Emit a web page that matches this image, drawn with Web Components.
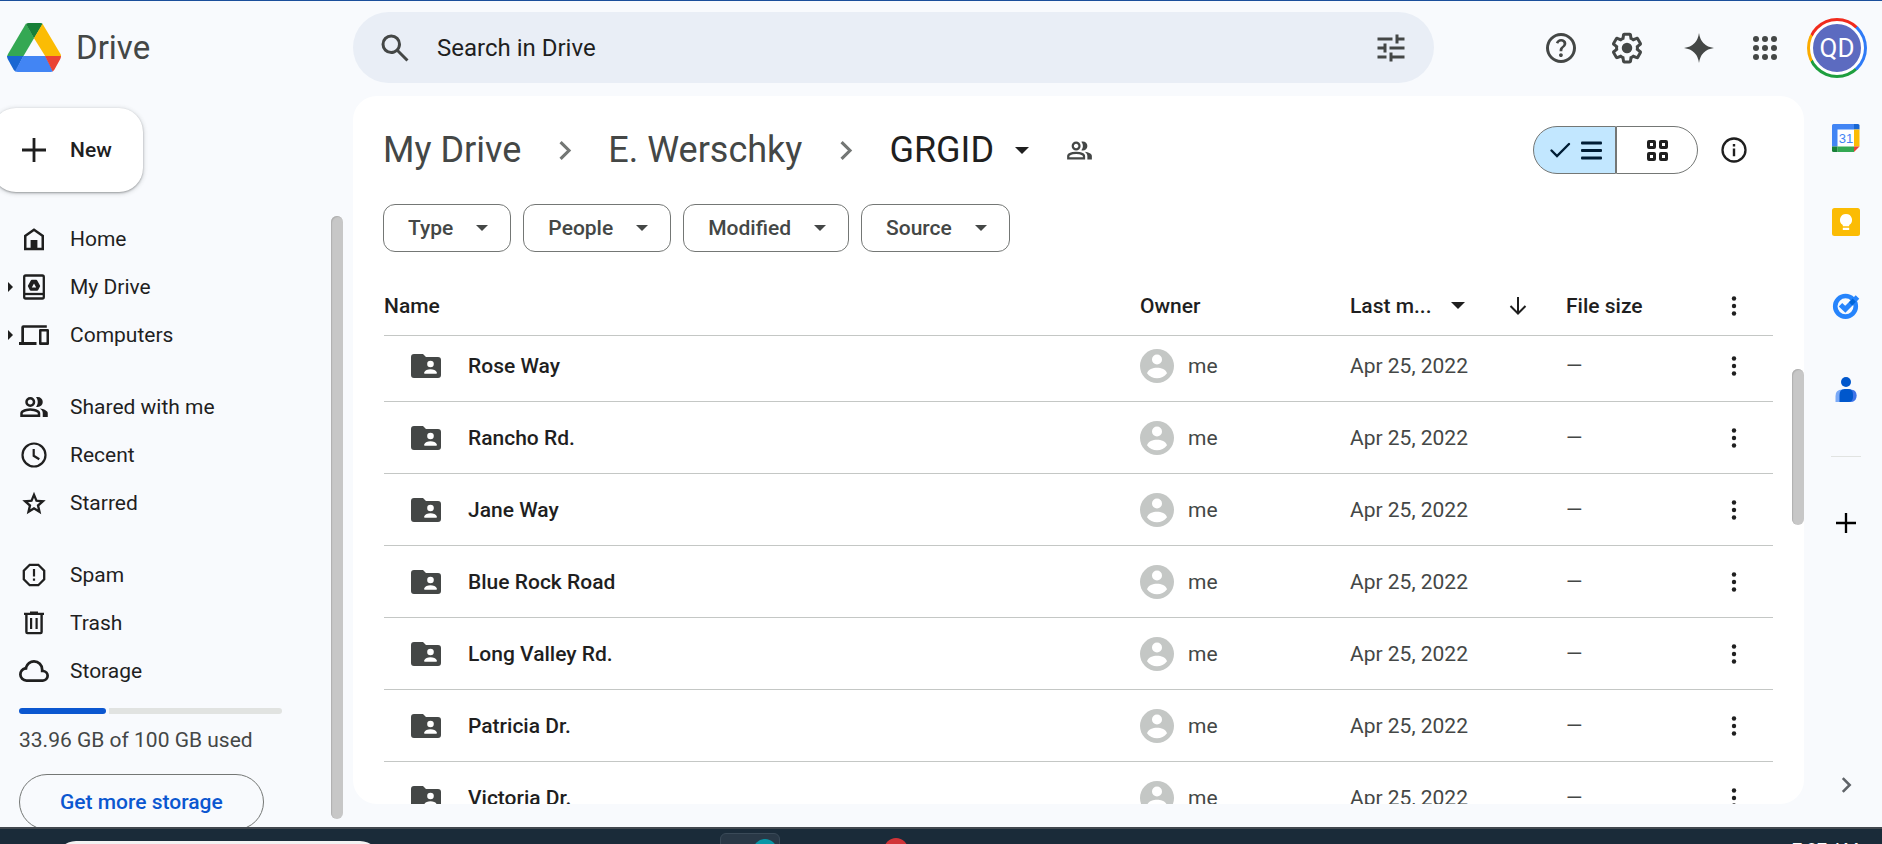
<!DOCTYPE html>
<html lang="en">
<head>
<meta charset="utf-8">
<title>GRGID - Google Drive</title>
<style>
  html, body { margin: 0; height: 100%; }
  body {
    --ink: #1f1f1f; --soft: #444746; --line: #c4c7c5; --edge: #747775;
    --page: #f8fafd; --panel: #ffffff; --field: #e9eef6; --accent: #0b57d0;
    font-family: Roboto, "Liberation Sans", sans-serif; font-size: 21px; line-height: 24px;
    color: var(--ink); background: var(--page); overflow: hidden;
  }
</style>
</head>
<body>
<drive-app></drive-app>
<script>
const ICONS = {
  search: ["0 -960 960 960", `<path d="M784-120 532-372q-30 24-69 38t-83 14q-109 0-184.500-75.500T120-580q0-109 75.500-184.500T380-840q109 0 184.500 75.500T640-580q0 44-14 83t-38 69l252 252-56 56ZM380-400q75 0 127.500-52.500T560-580q0-75-52.500-127.500T380-760q-75 0-127.500 52.500T200-580q0 75 52.500 127.500T380-400Z"/>`],
  tune: ["0 0 24 24", `<path d="M3 17v2h6v-2H3zM3 5v2h10V5H3zm10 16v-2h8v-2h-8v-2h-2v6h2zM7 9v2H3v2h4v2h2V9H7zm14 4v-2H11v2h10zm-6-4h2V7h4V5h-4V3h-2v6z"/>`],
  help: ["0 -960 960 960", `<path d="M478-240q21 0 35.500-14.500T528-290q0-21-14.500-35.500T478-340q-21 0-35.500 14.500T428-290q0 21 14.500 35.500T478-240Zm-36-154h74q0-33 7.500-52t42.500-52q26-26 41-49.500t15-56.500q0-56-41-86t-97-30q-57 0-92.500 30T342-618l66 26q5-18 22.500-39t53.500-21q32 0 48 17.500t16 38.500q0 20-12 37.500T506-526q-44 39-54 59t-10 73Zm38 314q-83 0-156-31.500T197-197q-54-54-85.500-127T80-480q0-83 31.500-156T197-763q54-54 127-85.500T480-880q83 0 156 31.500T763-763q54 54 85.500 127T880-480q0 83-31.500 156T763-197q-54 54-127 85.500T480-80Zm0-80q134 0 227-93t93-227q0-134-93-227t-227-93q-134 0-227 93t-93 227q0 134 93 227t227 93Z"/>`],
  gear: ["0 0 24 24", `<path d="M13.85 22.25h-3.7c-.74 0-1.36-.54-1.45-1.27l-.27-1.89c-.27-.14-.53-.29-.79-.46l-1.8.72c-.7.26-1.47-.03-1.81-.65L2.2 15.53c-.35-.66-.2-1.44.36-1.88l1.53-1.19c-.01-.15-.02-.3-.02-.46 0-.15.01-.31.02-.46l-1.52-1.19c-.59-.45-.74-1.26-.37-1.88l1.85-3.19c.34-.62 1.11-.9 1.79-.63l1.81.73c.26-.17.52-.32.78-.46l.27-1.91c.09-.7.71-1.25 1.44-1.25h3.7c.74 0 1.36.54 1.45 1.27l.27 1.89c.27.14.53.29.79.46l1.8-.72c.71-.26 1.48.03 1.82.65l1.84 3.18c.36.66.2 1.44-.36 1.88l-1.52 1.19c.01.15.02.3.02.46s-.01.31-.02.46l1.52 1.19c.56.45.72 1.23.37 1.86l-1.86 3.22c-.34.62-1.11.9-1.8.63l-1.8-.72c-.26.17-.52.32-.78.46l-.27 1.91c-.1.68-.72 1.22-1.46 1.22zm-3.23-2h2.76l.37-2.55.53-.22c.44-.18.88-.44 1.34-.78l.45-.34 2.38.96 1.38-2.4-2.03-1.58.07-.56c.03-.26.06-.51.06-.78s-.03-.53-.06-.78l-.07-.56 2.03-1.58-1.39-2.4-2.39.96-.45-.35c-.42-.32-.87-.58-1.33-.77l-.52-.22-.37-2.55h-2.76l-.37 2.55-.53.21c-.44.19-.88.44-1.34.79l-.45.33-2.38-.95-1.39 2.39 2.03 1.58-.07.56a7 7 0 0 0-.06.79c0 .26.02.53.06.78l.07.56-2.03 1.58 1.38 2.4 2.39-.96.45.35c.43.33.86.58 1.33.77l.53.22.38 2.55z"/><circle cx="12" cy="12" r="3.500"/>`],
  spark: ["0 0 24 24", `<path d="M12 2Q13.200 10.800 22 12Q13.200 13.200 12 22Q10.800 13.200 2 12Q10.800 10.800 12 2Z"/>`],
  apps: ["0 0 24 24", [6, 12, 18].flatMap(y => [6, 12, 18].map(x => `<circle cx="${x}" cy="${y}" r="2"/>`)).join("")],
  plus: ["0 0 24 24", `<path d="M10.600 0h2.800v10.600H24v2.800H13.400V24h-2.800V13.400H0v-2.800h10.600z"/>`],
  home: ["0 0 30 30", `<path fill-rule="evenodd" d="M5 11.300 15 4.300 25 11.300V26.300H5ZM7.500 12.600V23.800H11.600V16H18.400V23.800H22.500V12.600L15 7.300Z"/>`],
  mydrive: ["0 0 30 30", `<g fill="none" stroke="currentColor" stroke-width="2.300"><rect x="5.200" y="3.500" width="19.600" height="23" rx="1.500"/><path d="M5 22H25"/></g><path fill-rule="evenodd" d="M12.800 7.800H17.200Q17.800 7.800 18.200 8.500L21 13.500Q21.300 14 21 14.600L19.200 18Q18.900 18.700 18 18.700H12Q11.100 18.700 10.800 18L9 14.600Q8.700 14 9 13.500L11.800 8.500Q12.200 7.800 12.800 7.800ZM15 11.500 12.800 15.500H17.200Z"/>`],
  computers: ["0 0 30 30", `<path fill-rule="evenodd" d="M2.300 22V7.300Q2.300 5.300 4.300 5.300H27.800V7.800H5V22H17.500V25H0V22ZM21.300 9H28.700Q30 9 30 10.300V23.700Q30 25 28.700 25H21.300Q20 25 20 23.700V10.300Q20 9 21.300 9ZM22.500 11.500V22.300H27.500V11.500Z"/>`],
  people: ["0 -960 960 960", `<path d="M40-160v-112q0-34 17.500-62.500T104-378q62-31 126-46.500T360-440q66 0 130 15.500T616-378q29 15 46.500 43.500T680-272v112H40Zm720 0v-120q0-44-24.500-84.500T666-434q51 6 96 20.500t84 35.500q36 20 55 44.500t19 53.500v120H760ZM360-480q-66 0-113-47t-47-113q0-66 47-113t113-47q66 0 113 47t47 113q0 66-47 113t-113 47Zm400-160q0 66-47 113t-113 47q-11 0-28-2.500t-28-5.500q27-32 41.500-71t14.500-81q0-42-14.500-81T544-792q14-5 28-6.500t28-1.500q66 0 113 47t47 113ZM120-240h480v-32q0-11-5.500-20T580-306q-54-27-109-40.500T360-360q-56 0-111 13.500T140-306q-9 5-14.500 14t-5.500 20v32Zm240-320q33 0 56.500-23.500T440-640q0-33-23.500-56.500T360-720q-33 0-56.500 23.500T280-640q0 33 23.500 56.500T360-560Z"/>`],
  recent: ["0 0 30 30", `<g fill="none" stroke="currentColor" stroke-width="2.200"><circle cx="15" cy="15" r="11.500"/><path d="M14.700 9V15.800L20.300 19.300"/></g>`],
  star: ["-32 -972 1024 1024", `<path d="m354-247 126-76 126 77-33-144 111-96-146-13-58-136-58 135-146 13 111 97-33 143ZM233-80l65-281L80-550l288-25 112-265 112 265 288 25-218 189 65 281-247-149L233-80Z"/>`],
  spam: ["0 0 30 30", `<path fill="none" stroke="currentColor" stroke-width="2.300" d="M10.700 4.800H19.300L25.200 10.700V19.300L19.300 25.200H10.700L4.800 19.300V10.700Z"/><path d="M13.900 9h2.200v7.500h-2.200zM13.900 18.500h2.200v2.300h-2.200z"/>`],
  trash: ["0 0 30 30", `<path fill-rule="evenodd" d="M5 4.700H11V3.400H19V4.700H25V7H23.800V24Q23.800 26.200 21.600 26.200H8.400Q6.200 26.200 6.200 24V7H5ZM8.600 7V23.900H21.400V7Z"/><path d="M11 10h2.200v11H11zM16.500 10h2.200v11h-2.200z"/>`],
  cloud: ["40 -920 880 880", `<path d="M260-160q-91 0-155.500-63T40-377q0-78 47-139t123-78q25-92 100-149t170-57q117 0 198.500 81.500T760-520q69 8 114.500 59.500T920-340q0 75-52.500 127.500T740-160H260Zm0-80h480q42 0 71-29t29-71q0-42-29-71t-71-29h-60v-80q0-83-58.500-141.500T480-720q-83 0-141.500 58.500T280-520h-20q-58 0-99 41t-41 99q0 58 41 99t99 41Z"/>`],
  chevron: ["0 0 24 24", `<path fill="none" stroke="currentColor" stroke-width="2.800" d="M8.500 4.500 16 12 8.500 19.500"/>`],
  caret: ["0 0 14 7", `<path d="M0 0H14L7 7Z"/>`],
  sidecaret: ["0 0 5 10", `<path d="M0 0 5 5 0 10Z"/>`],
  check: ["0 0 24 24", `<path fill="none" stroke="currentColor" stroke-width="2.400" stroke-linecap="round" d="M3.500 12.500 9 18 21 6"/>`],
  rows: ["0 0 21 21", `<rect y="1.500" width="21" height="3" rx="1"/><rect y="9" width="21" height="3" rx="1"/><rect y="16.500" width="21" height="3" rx="1"/>`],
  grid: ["0 0 21 21", `<g fill="none" stroke="currentColor" stroke-width="3"><rect x="1.500" y="1.500" width="6" height="6" rx=".5"/><rect x="13.500" y="1.500" width="6" height="6" rx=".5"/><rect x="1.500" y="13.500" width="6" height="6" rx=".5"/><rect x="13.500" y="13.500" width="6" height="6" rx=".5"/></g>`],
  info: ["0 0 26 26", `<circle cx="13" cy="13" r="11.500" fill="none" stroke="currentColor" stroke-width="2.300"/><path d="M11.800 11.500h2.400v7.800h-2.400zM11.800 7h2.400v2.400h-2.400z"/>`],
  arrow: ["0 0 18 18", `<path fill="none" stroke="currentColor" stroke-width="2" d="M9 0V16M1.500 9 9 16.500 16.500 9"/>`],
  dots: ["0 0 20 20", `<circle cx="10" cy="2.500" r="2.200"/><circle cx="10" cy="10" r="2.200"/><circle cx="10" cy="17.500" r="2.200"/>`],
  folder: ["0 0 30 24", `<path d="M3 0H12L15 3H27Q30 3 30 6V21Q30 24 27 24H3Q0 24 0 21V3Q0 0 3 0Z"/><circle cx="19.500" cy="10" r="3.300" fill="#fff"/><path fill="#fff" d="M13.300 19.800V18.300C14.500 14.300 24.500 14.300 25.700 18.300V19.800Z"/>`],
  person: ["0 0 34 34", `<circle cx="17" cy="17" r="17"/><circle cx="17" cy="10.500" r="5" fill="#fff"/><path fill="#fff" d="M7 24.300C8 20.500 13 18.800 17 18.800S26 20.500 27 24.300C24.500 27.500 21 29.300 17 29.300S9.500 27.500 7 24.300Z"/>`],
  logo: ["0 0 54 49", `<path fill="#34a853" d="M19 .5 1 31Q0 33 0 33.500H16.200L27 15.300Z"/><path fill="#188038" d="M21.500 0H33.500Q35 0 35.700 1L27 15.500 19 1Q20 0 21.500 0Z"/><path fill="#fbbc04" d="M35.500.7 53.500 31Q54 32 54 33.300H38.300L27 15.300Z"/><path fill="#1967d2" d="M0 33H16.500L8.500 48.500Q7.500 48 6.500 46.500L.7 36Q0 34.500 0 33Z"/><path fill="#4285f4" d="M16.300 33H38.300L46 48.300Q45 49 43.500 49H11Q9 49 8 48.300Z"/><path fill="#ea4335" d="M38 33H54Q54 34.500 53.300 36L47.500 46.500Q46.800 47.800 45.700 48.400Z"/>`],
  calendar: ["0 0 28 28", `<rect x="5" y="5" width="18" height="18" fill="#fff"/><path fill="#4285f4" d="M1.500 0H22V5.500H5.500V22.500H0V1.500Q0 0 1.500 0Z"/><path fill="#1967d2" d="M22 0H26Q27.500 0 27.500 1.500V5.500H22Z"/><path fill="#fbbc04" d="M22 5.500H27.500V22.500H22Z"/><path fill="#34a853" d="M5.500 22.500H22V28H5.500Z"/><path fill="#188038" d="M0 22.500H5.500V28H1.500Q0 28 0 26.500Z"/><path fill="#ea4335" d="M22 22.500H27.500L22 28Z"/><text x="14" y="19" font-size="13" font-weight="500" text-anchor="middle" fill="#4285f4">31</text>`],
  keep: ["0 0 28 28", `<rect width="28" height="28" rx="2.500" fill="#fbbc04"/><path fill="#fff" d="M14 6a6 6 0 0 1 3.200 11.100V18.300H10.800V17.100A6 6 0 0 1 14 6ZM10.800 19.700H17.200V22H10.800Z"/>`],
  tasks: ["0 0 28 28", `<circle cx="13.500" cy="14.300" r="10.300" fill="none" stroke="#2684fc" stroke-width="4.600"/><path fill="none" stroke="#2684fc" stroke-width="5" d="M8.500 12.800 13.300 17.300 25.500 5"/><path stroke="#0066da" stroke-width="4.600" d="M18.600 11.800 22.300 8.200"/>`],
  contacts: ["0 0 28 28", `<circle cx="14" cy="6" r="5" fill="#0057cc"/><path fill="#7baaf7" d="M3.500 26V20Q3.500 13.500 10 13.500H18Q24.500 13.500 24.500 19.500Q24.500 26 18.500 26Z"/><path fill="#3f74e8" d="M13 13.500H18Q24.500 13.500 24.500 19.500Q24.500 26 18.500 26H13Z"/><path fill="#0057cc" d="M7.500 26V19Q7.500 13 12.500 13H16Q21 13 21 18.500V21Q21 26 16 26Z"/>`]
};

function define(name, html, setup) {
  const tpl = document.createElement("template");
  tpl.innerHTML = html;
  customElements.define(name, class extends HTMLElement {
    connectedCallback() {
      if (this.shadowRoot) return;
      const root = this.attachShadow({ mode: "open" });
      root.append(tpl.content.cloneNode(true));
      if (setup) setup(this, root);
    }
  });
}

define("d-icon", `<style>:host{display:block;flex:none}svg{display:block;fill:currentColor}</style>`, (el, root) => {
  const [box, body] = ICONS[el.getAttribute("name")];
  const w = el.getAttribute("w") || 30, h = el.getAttribute("h") || w;
  root.innerHTML += `<svg viewBox="${box}" width="${w}" height="${h}" aria-hidden="true">${body}</svg>`;
});

define("icon-button", `<style>
  :host{display:block;flex:none;width:60px;height:60px}
  button{display:flex;align-items:center;justify-content:center;width:100%;height:100%;padding:0;border:0;background:none;color:inherit}
</style><button><slot></slot></button>`, (el, root) => root.querySelector("button").setAttribute("aria-label", el.getAttribute("label")));

define("search-bar", `<style>
  :host{display:block}
  form{display:flex;align-items:center;height:71px;box-sizing:border-box;padding:0 13px 0 12px;border-radius:36px;background:var(--field);color:var(--soft)}
  input{flex:1;min-width:0;margin-left:12px;padding:0;border:0;outline:0;background:none;font:inherit;font-size:24px;line-height:36px;color:var(--ink)}
  input::placeholder{color:var(--ink);opacity:1}
</style>
<form role="search">
  <icon-button label="Search"><d-icon name="search" w="36"></d-icon></icon-button>
  <input type="text" aria-label="Search in Drive" placeholder="Search in Drive">
  <icon-button label="Advanced search"><d-icon name="tune" w="36"></d-icon></icon-button>
</form>`);

define("account-avatar", `<style>
  :host{display:block;flex:none}
  button{display:flex;align-items:center;justify-content:center;width:60px;height:60px;padding:3px;border:0;border-radius:50%;
    background:conic-gradient(#f12b1d 0 43deg,#2f7bf6 43deg 138deg,#1e9e3e 138deg 243deg,#fbab00 243deg 297deg,#f12b1d 297deg)}
  span{display:flex;align-items:center;justify-content:center;box-sizing:border-box;width:54px;height:54px;border:3px solid #fff;border-radius:50%;background:#5c6bc0;color:#fff;font:26px/36px Roboto,sans-serif}
</style><button aria-label="Account"><span><slot></slot></span></button>`);

define("top-bar", `<style>
  :host{display:grid;grid-template-columns:353px 1fr auto;align-items:center;height:96px;box-sizing:border-box;padding-bottom:2px;border-top:1px solid #1b4f9b;color:var(--soft)}
  .brand{display:flex;align-items:center;gap:15px;padding-left:7px;color:inherit;text-decoration:none;font-size:33px;line-height:36px}
  .tools,.pair{display:flex}
  .tools{gap:12px;padding:0 15px 0 97px}
  .pair{gap:6px}
</style>
<a class="brand" href="#home"><d-icon name="logo" w="54" h="49"></d-icon><span>Drive</span></a>
<search-bar></search-bar>
<div class="tools">
  <div class="pair">
    <icon-button label="Support"><d-icon name="help" w="36"></d-icon></icon-button>
    <icon-button label="Settings"><d-icon name="gear" w="36"></d-icon></icon-button>
  </div>
  <div class="pair">
    <icon-button label="Ask Gemini"><d-icon name="spark" w="36"></d-icon></icon-button>
    <icon-button label="Google apps"><d-icon name="apps" w="36"></d-icon></icon-button>
  </div>
  <account-avatar>QD</account-avatar>
</div>`);

define("nav-item", `<style>
  :host{display:block}
  a{display:grid;grid-template-columns:11px 30px 1fr;align-items:center;height:48px;padding-left:8px;color:inherit;text-decoration:none}
  .label{margin-left:21px}
</style><a href="#"><span class="lead"></span><span class="icon"></span><span class="label"><slot></slot></span></a>`, (el, root) => {
  const name = el.getAttribute("icon");
  root.querySelector("a").href = "#" + name;
  root.querySelector(".icon").innerHTML = `<d-icon name="${name}"></d-icon>`;
  if (el.hasAttribute("expandable")) root.querySelector(".lead").innerHTML = `<d-icon name="sidecaret" w="5" h="10"></d-icon>`;
});

define("storage-meter", `<style>
  :host{display:block;padding:13px 0 0 19px}
  .bar{display:flex;gap:3px;width:263px;height:6px}
  .used{width:33%;border-radius:3px;background:var(--accent)}
  .free{flex:1;border-radius:0 3px 3px 0;background:#e1e3e1}
  p{margin:14px 0 22px;color:var(--soft)}
  button{height:56px;padding:0 40px;border:1px solid var(--edge);border-radius:28px;background:none;font:inherit;font-weight:500;color:var(--accent)}
</style>
<div class="bar" role="meter" aria-label="Storage used" aria-valuemin="0" aria-valuemax="100" aria-valuenow="33.96"><div class="used"></div><div class="free"></div></div>
<p>33.96 GB of 100 GB used</p>
<button>Get more storage</button>`);

define("side-bar", `<style>
  :host{display:flex;flex-direction:column;min-height:0;overflow:hidden}
  .new{display:flex;align-items:center;gap:24px;align-self:flex-start;flex:none;height:84px;margin:12px 0 23px -8px;padding:0 31px 0 30px;border:0;border-radius:24px;
    background:#fff;color:inherit;font:inherit;font-weight:500;box-shadow:0 1px 2px rgba(60,64,67,.4),0 1px 4px 1px rgba(60,64,67,.18)}
  .scroll{display:flex;flex:1;min-height:0}
  .list{overflow:hidden;flex:1}
  .group{margin-bottom:24px}
  .group.last{margin:0}
  .thumb{width:12px;margin:1px 10px 8px 0;border-radius:6px;background:#c7c7c7;box-shadow:inset 1px 1px 1px #b0b0b0}
</style>
<button class="new"><d-icon name="plus" w="24"></d-icon><span>New</span></button>
<div class="scroll">
  <nav class="list" aria-label="Drive">
    <div class="group">
      <nav-item icon="home">Home</nav-item>
      <nav-item icon="mydrive" expandable>My Drive</nav-item>
      <nav-item icon="computers" expandable>Computers</nav-item>
    </div>
    <div class="group">
      <nav-item icon="people">Shared with me</nav-item>
      <nav-item icon="recent">Recent</nav-item>
      <nav-item icon="star">Starred</nav-item>
    </div>
    <div class="group last">
      <nav-item icon="spam">Spam</nav-item>
      <nav-item icon="trash">Trash</nav-item>
      <nav-item icon="cloud">Storage</nav-item>
    </div>
    <storage-meter></storage-meter>
  </nav>
  <div class="thumb"></div>
</div>`);

define("bread-crumbs", `<style>
  :host{display:block;font-size:36px;line-height:48px;color:var(--soft)}
  nav{display:flex;align-items:center}
  a{color:inherit;text-decoration:none}
  .sep{display:flex;justify-content:center;width:87px;color:var(--edge)}
  .current{display:flex;align-items:center;gap:21px;padding:0;border:0;background:none;font:inherit;color:var(--ink)}
  icon-button{margin-left:20px}
</style>
<nav aria-label="Folder path">
  <a href="#my-drive">My Drive</a><span class="sep"><d-icon name="chevron" w="27"></d-icon></span>
  <a href="#werschky">E. Werschky</a><span class="sep"><d-icon name="chevron" w="27"></d-icon></span>
  <button class="current"><span>GRGID</span><d-icon name="caret" w="14" h="7"></d-icon></button>
  <icon-button label="Manage access"><d-icon name="people" w="27"></d-icon></icon-button>
</nav>`);

define("view-toggle", `<style>
  :host{display:flex;height:48px;color:var(--ink)}
  button{display:flex;align-items:center;justify-content:center;gap:9px;box-sizing:border-box;width:83px;padding:0;border:1px solid var(--edge);background:none;color:inherit}
  .list{border-radius:24px 0 0 24px;background:#c2e7ff;color:#001d35}
  .tiles{width:82px;border-radius:0 24px 24px 0}
</style>
<button class="list" aria-label="List layout" aria-pressed="true"><d-icon name="check" w="24"></d-icon><d-icon name="rows" w="21"></d-icon></button>
<button class="tiles" aria-label="Grid layout" aria-pressed="false"><d-icon name="grid" w="21"></d-icon></button>`);

define("filter-chip", `<style>
  :host{display:block}
  button{display:flex;align-items:center;gap:23px;height:48px;padding:0 22px 0 24px;border:1px solid var(--edge);border-radius:12px;background:none;font:inherit;font-weight:500;color:var(--soft)}
</style><button aria-haspopup="menu"><span><slot></slot></span><d-icon name="caret" w="12" h="6"></d-icon></button>`);

define("file-table", `<style>
  :host{display:block;overflow:hidden}
  table{width:100%;table-layout:fixed;border-collapse:separate;border-spacing:0}
  th,td{box-sizing:border-box;padding:0;border-bottom:1px solid var(--line);text-align:left;font-weight:400;color:var(--soft)}
  td{height:72px}
  th{position:sticky;top:0;height:60px;background:var(--panel);font-weight:500;color:var(--ink)}
  .owner{width:210px}.date{width:216px}.size{width:130px}.more{width:77px}
  .name,.who,.sort{display:flex;align-items:center}
  .name{gap:27px;padding-left:27px;font-weight:500;color:var(--ink)}
  .name d-icon{color:var(--soft)}
  .who{gap:14px}.who d-icon{color:var(--line)}
  .sort button{display:flex;align-items:center;padding:0;border:0;background:none;color:inherit;font:inherit;text-align:left}
  .label{width:101px}
  .sort .dir{margin-left:44px}
  icon-button{width:76px;height:48px;color:var(--ink)}
</style>
<table>
  <thead><tr>
    <th>Name</th><th class="owner">Owner</th>
    <th class="date"><div class="sort"><button><span class="label">Last m...</span><d-icon name="caret" w="14" h="7"></d-icon></button><button class="dir" aria-label="Reverse sort direction"><d-icon name="arrow" w="18"></d-icon></button></div></th>
    <th class="size">File size</th>
    <th class="more"><icon-button label="More sorting options"><d-icon name="dots" w="20"></d-icon></icon-button></th>
  </tr></thead>
  <tbody></tbody>
</table>`, (el, root) => {
  const folders = ["Rose Way", "Rancho Rd.", "Jane Way", "Blue Rock Road", "Long Valley Rd.", "Patricia Dr.", "Victoria Dr."];
  root.querySelector("tbody").innerHTML = folders.map(f => `<tr>
    <td><div class="name"><d-icon name="folder" w="30" h="24"></d-icon><span>${f}</span></div></td>
    <td><div class="who"><d-icon name="person" w="34"></d-icon><span>me</span></div></td>
    <td>Apr 25, 2022</td><td>—</td>
    <td><icon-button label="More actions"><d-icon name="dots" w="20"></d-icon></icon-button></td></tr>`).join("");
  el.scrollTop = 6;
});

define("file-panel", `<style>
  :host{display:flex;flex-direction:column;min-width:0;min-height:0;margin-bottom:23px;border-radius:24px;background:var(--panel);overflow:hidden}
  .head{display:flex;align-items:center;justify-content:space-between;height:108px;flex:none;padding:0 40px 0 30px}
  .actions{display:flex;align-items:center;gap:6px}
  .chips{display:flex;gap:12px;flex:none;padding:0 30px}
  .body{display:flex;flex:1;min-height:0;margin-top:24px;padding-left:31px;gap:19px}
  file-table{flex:1;min-width:0}
  .thumb{width:12px;height:156px;margin-top:93px;border-radius:6px;background:#c7c7c7;box-shadow:inset 1px 1px 1px #b0b0b0}
</style>
<div class="head">
  <bread-crumbs></bread-crumbs>
  <div class="actions"><view-toggle></view-toggle><icon-button label="View details"><d-icon name="info" w="26"></d-icon></icon-button></div>
</div>
<div class="chips"><filter-chip>Type</filter-chip><filter-chip>People</filter-chip><filter-chip>Modified</filter-chip><filter-chip>Source</filter-chip></div>
<div class="body"><file-table></file-table><div class="thumb"></div></div>`);

define("side-rail", `<style>
  :host{display:flex;flex-direction:column;align-items:center;padding-left:6px}
  icon-button{height:84px}
  hr{width:30px;height:1px;margin:24px 0;border:0;background:#e1e3e1}
  .plus{color:#000}
  .hide{margin-top:auto;color:#5f6368}
</style>
<icon-button label="Calendar"><d-icon name="calendar" w="28"></d-icon></icon-button>
<icon-button label="Keep"><d-icon name="keep" w="28"></d-icon></icon-button>
<icon-button label="Tasks"><d-icon name="tasks" w="28"></d-icon></icon-button>
<icon-button label="Contacts"><d-icon name="contacts" w="28"></d-icon></icon-button>
<hr>
<icon-button class="plus" label="Get add-ons"><d-icon name="plus" w="20"></d-icon></icon-button>
<icon-button class="hide" label="Hide side panel"><d-icon name="chevron" w="22"></d-icon></icon-button>`);

define("task-bar", `<style>
  :host{display:flex;height:15px;overflow:hidden;border-top:2px solid #42484f;background:#1a2b39;color:#fff}
  .find{width:324px;height:40px;margin:12px 340px 0 56px;border-radius:20px;background:#f3f3f3}
  .tile{width:60px;height:48px;margin-top:4px;box-sizing:border-box;padding:5px 0 0 32px;border:1px solid #3a4a58;border-radius:6px;background:#293846}
  .dot{width:24px;height:24px;border-radius:50%;background:#0797a7}
  .alert{margin:9px 0 0 104px;background:#d13438}
  time{margin:12px 23px 0 auto;font-size:18px;line-height:18px}
</style>
<div class="find"></div>
<div class="tile"><div class="dot"></div></div>
<div class="dot alert"></div>
<time>7:37 AM</time>`);

define("drive-app", `<style>
  :host{display:grid;grid-template-rows:96px minmax(0,1fr) auto;height:100vh}
  main{display:grid;grid-template-columns:353px minmax(0,1fr) 78px;min-height:0}
</style>
<top-bar></top-bar>
<main><side-bar></side-bar><file-panel></file-panel><side-rail></side-rail></main>
<task-bar></task-bar>`);
</script>
</body>
</html>
